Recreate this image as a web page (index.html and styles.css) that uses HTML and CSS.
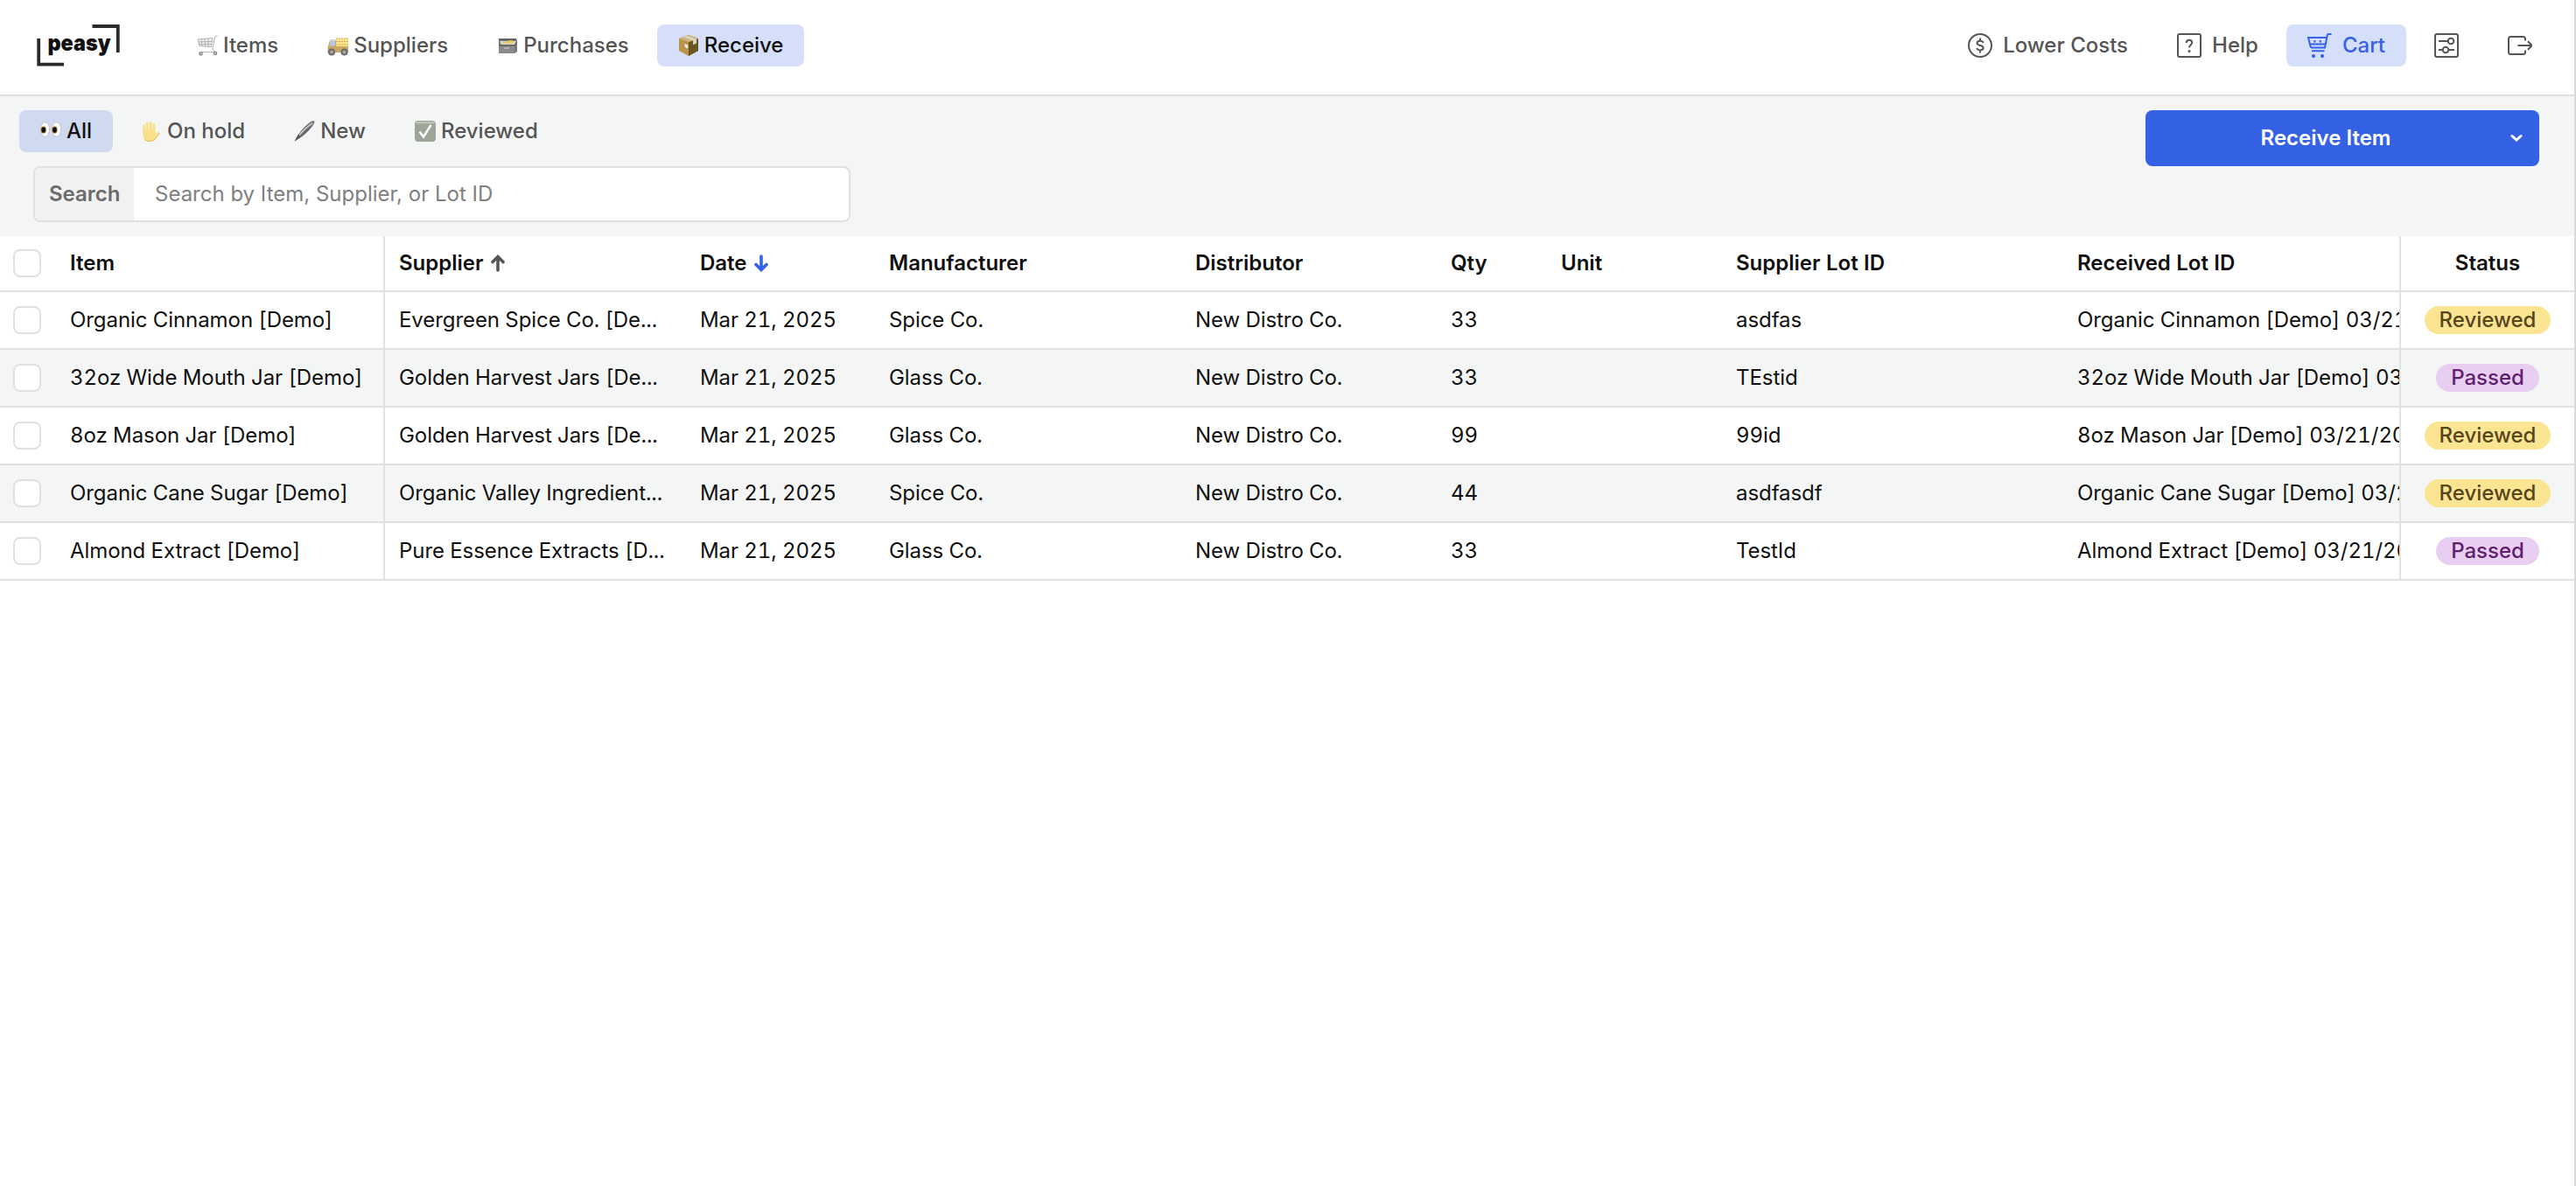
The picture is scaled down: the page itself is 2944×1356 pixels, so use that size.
FILE: index.html
```html
<!DOCTYPE html>
<html lang="en">
<head>
<meta charset="utf-8">
<title>Receive</title>
<link rel="stylesheet" href="styles.css">
</head>
<body>
<div class="app">
  <header class="topbar">
    <svg class="logo" viewBox="0 0 96 50" role="img" aria-label="peasy">
      <path d="M63.500 3h29.300v30M2.200 17v29.600H31" fill="none" stroke="#2b2b2b" stroke-width="3.8"/>
      <text class="logo-text" x="12.500" y="30.500" textLength="72" lengthAdjust="spacingAndGlyphs">peasy</text>
    </svg>
    <nav class="nav">
      <a class="tab"><svg class="emoji" viewBox="0 0 24 24"><path d="M1 5l17-1.5-1.5 10L3 12.5z" fill="#f1f1f1"/><path d="M1 5l17-1.5-1.5 10L3 12.5zM5 4.8l1 8M9 4.5l.6 8.6M13 4l0 9.4M1.5 8l16-.6M2 10.6l15-.2M23.500.8L20.5 2 18 16l3 3.5H5" fill="none" stroke="#a9a9a9" stroke-width=".9"/><circle cx="4.5" cy="21.3" r="1.7" fill="#ccc" stroke="#888" stroke-width="1.3"/><circle cx="21" cy="21" r="1.7" fill="#ccc" stroke="#888" stroke-width="1.3"/></svg>Items</a>
      <a class="tab"><svg class="emoji" viewBox="0 0 24 24"><path d="M10 4h14v15H10z" fill="#ffe588"/><path d="M10 4h14M10 7.5h14M10 11h14" stroke="#c9a95a" stroke-width="1.2" stroke-dasharray="2 1"/><path d="M.5 14L3 6.500q.3-1 1.500-1H10V13h14v7H.5z" fill="#c9a862"/><path d="M3.800 7H9v5.500H2.500z" fill="#b4c7f2"/><path d="M3 5.500h7v1.500H3z" fill="#d5d5d5"/><circle cx="5" cy="19.500" r="3" fill="#aaa" stroke="#6b6b6b" stroke-width="2"/><circle cx="19.500" cy="19.500" r="3" fill="#aaa" stroke="#6b6b6b" stroke-width="2"/></svg>Suppliers</a>
      <a class="tab"><svg class="emoji" viewBox="0 0 24 24"><path d="M2 4h20l1 3v12l-3 2H2z" fill="#777"/><path d="M2 4h20v2H2z" fill="#5d6663"/><path d="M3 7h19l-2 4H5z" fill="#d8d4c2"/><path d="M7 8.500h10M13 7h5" stroke="#edc64e" stroke-width="1.600"/><path d="M2 12h18v9H2z" fill="#8a8a8a"/><path d="M2 12h18M20 12l3-4" stroke="#555"/><path d="M8 15h6" stroke="#bbb" stroke-width="1.500"/></svg>Purchases</a>
      <a class="tab tab-active"><svg class="emoji" viewBox="0 0 24 24"><path d="M12 0l11 4v14l-11 6L1 18V4z" fill="#b8944d"/><path d="M12 8l11-4v14l-11 6z" fill="#6b5621"/><path d="M12 0l11 4-11 4L1 4z" fill="#d0b37a"/><path d="M6 2.200l11 4v5l4-1.700V4.800L9.500 1z" fill="#d9d4c8"/><path d="M7 10l4 1.500v4L8 14z" fill="#eee"/></svg>Receive</a>
    </nav>
    <div class="actions">
      <a class="tab"><svg class="icon" viewBox="0 0 28 28"><circle cx="14" cy="14" r="13"/><path d="M14 5.500v3M14 19.500v3M17.600 10.800C17 9.300 15.700 8.700 14 8.700c-2 0-3.500 1-3.500 2.600 0 3.600 7.200 1.700 7.200 5.300 0 1.700-1.600 2.800-3.700 2.800-1.900 0-3.300-.8-3.900-2.400"/></svg>Lower Costs</a>
      <a class="tab"><svg class="icon" viewBox="0 0 28 28"><rect x="1" y="1" width="26" height="26" rx="2"/><path d="M10.800 11c0-2 1.300-3.200 3.200-3.200s3.200 1.200 3.200 3c0 2.400-3.200 2.700-3.200 5.700"/><circle cx="14" cy="20.500" r="1.500" class="dot"/></svg>Help</a>
      <a class="tab tab-cart"><svg class="icon" viewBox="0 0 28 28"><path d="M27.500 1h-3.300c-.9 0-1.200.5-1.400 1.300L20 16.500H5.500q-1.500 0-2-1.500L1 5h20.500M2.500 12.500h18.500M5 20.300h14.500M8.300 8v2.500M14.800 8v2.500"/><circle cx="7" cy="26" r="2.100" class="dot"/><circle cx="17" cy="26" r="2.100" class="dot"/></svg>Cart</a>
      <a class="tab"><svg class="icon" viewBox="0 0 28 28"><rect x="1" y="1" width="26" height="26" rx="2"/><path d="M5 9h10.500M5 19h4.500M16.500 19H23"/><circle cx="19" cy="9" r="3.300"/><circle cx="13" cy="19" r="3.300"/></svg></a>
      <a class="tab"><svg class="icon" viewBox="0 0 28 28"><path d="M20 8.500V6.500q0-2.500-2.500-2.500h-14Q1 4 1 6.500v15Q1 24 3.500 24h14q2.500 0 2.500-2.500V19.500M11.500 14h16M23 9.200l4.500 4.800-4.500 4.800"/></svg></a>
    </div>
  </header>

  <section class="toolbar">
    <div class="filters">
      <div class="filter-tabs">
        <a class="tab tab-active"><svg class="emoji" viewBox="0 0 24 24"><ellipse cx="5.500" cy="10" rx="5" ry="8.300" fill="#fff" stroke="#c4c4c4"/><ellipse cx="18.500" cy="10" rx="5" ry="8.300" fill="#fff" stroke="#c4c4c4"/><ellipse cx="3.800" cy="10.500" rx="3" ry="4" fill="#8b641f"/><ellipse cx="3.800" cy="10.500" rx="2.200" ry="3" fill="#111"/><ellipse cx="16.500" cy="10.500" rx="3" ry="4" fill="#8b641f"/><ellipse cx="16.500" cy="10.500" rx="2.200" ry="3" fill="#111"/></svg>All</a>
        <a class="tab"><svg class="emoji" viewBox="0 0 24 24"><path d="M3.800 13V6M7.500 12V3M11.300 12V2M15 13V4.500" fill="none" stroke="#fbe08a" stroke-width="3" stroke-linecap="round"/><path d="M2.300 11h14.200v5l2.500-3q1.500-1.300 2.600-.2L17.500 19.500Q15 24 10 24 3.500 24 2.300 16z" fill="#fbe08a"/><path d="M4 21.500q6 4 12 0l5.500-7.500" fill="none" stroke="#ddb65c" stroke-width=".9"/></svg>On hold</a>
        <a class="tab"><svg class="emoji" viewBox="0 0 24 24"><path d="M.5 23.500L5 15.500Q13 5 20 .8q4.500-1.500 3 2.200Q18.500 11 8 19z" fill="#666"/><path d="M6 16.500Q13 8 21.500 2.500" stroke="#c4c4c4" stroke-width="1.800" fill="none"/><path d="M.5 23.500l4.500-8 2 3.500z" fill="#555"/></svg>New</a>
        <a class="tab"><svg class="emoji" viewBox="0 0 24 24"><rect width="24" height="24" rx="4" fill="#9ea597"/><rect x="1.500" y="1" width="21" height="2.500" rx="1.200" fill="#bcc1b9"/><path d="M5.500 12.500l4.500 6L18.500 5" fill="none" stroke="#fff" stroke-width="2.500"/></svg>Reviewed</a>
      </div>
      <div class="search">
        <span class="search-label">Search</span>
        <span class="search-input">Search by Item, Supplier, or Lot ID</span>
      </div>
    </div>
    <div class="split-button">
      <span class="split-main">Receive Item</span>
      <span class="split-toggle"><svg class="chevron" viewBox="0 0 14 10"><path d="M2 2.500l5 4.500 5-4.500"/></svg></span>
    </div>
  </section>

  <main class="table">
    <div class="row row-head">
      <span class="cell cell-check"><i class="checkbox"></i></span>
      <span class="cell cell-item">Item</span>
      <span class="cell">Supplier<svg class="sort" viewBox="0 0 16 20"><path d="M8 18V3M2 8.500l6-6 6 6"/></svg></span>
      <span class="cell">Date<svg class="sort sort-on" viewBox="0 0 16 20"><path d="M8 2v15M2 11.500l6 6 6-6"/></svg></span>
      <span class="cell">Manufacturer</span>
      <span class="cell">Distributor</span>
      <span class="cell">Qty</span>
      <span class="cell">Unit</span>
      <span class="cell">Supplier Lot ID</span>
      <span class="cell cell-lot">Received Lot ID</span>
      <span class="cell cell-status">Status</span>
    </div>
    <div class="row">
      <span class="cell cell-check"><i class="checkbox"></i></span>
      <span class="cell cell-item">Organic Cinnamon [Demo]</span>
      <span class="cell">Evergreen Spice Co. [De...</span>
      <span class="cell">Mar 21, 2025</span>
      <span class="cell">Spice Co.</span>
      <span class="cell">New Distro Co.</span>
      <span class="cell">33</span>
      <span class="cell"></span>
      <span class="cell">asdfas</span>
      <span class="cell cell-lot">Organic Cinnamon [Demo] 03/21/2025</span>
      <span class="cell cell-status"><b class="badge badge-reviewed">Reviewed</b></span>
    </div>
    <div class="row">
      <span class="cell cell-check"><i class="checkbox"></i></span>
      <span class="cell cell-item">32oz Wide Mouth Jar [Demo]</span>
      <span class="cell">Golden Harvest Jars [De...</span>
      <span class="cell">Mar 21, 2025</span>
      <span class="cell">Glass Co.</span>
      <span class="cell">New Distro Co.</span>
      <span class="cell">33</span>
      <span class="cell"></span>
      <span class="cell">TEstid</span>
      <span class="cell cell-lot">32oz Wide Mouth Jar [Demo] 03/21/2025</span>
      <span class="cell cell-status"><b class="badge badge-passed">Passed</b></span>
    </div>
    <div class="row">
      <span class="cell cell-check"><i class="checkbox"></i></span>
      <span class="cell cell-item">8oz Mason Jar [Demo]</span>
      <span class="cell">Golden Harvest Jars [De...</span>
      <span class="cell">Mar 21, 2025</span>
      <span class="cell">Glass Co.</span>
      <span class="cell">New Distro Co.</span>
      <span class="cell">99</span>
      <span class="cell"></span>
      <span class="cell">99id</span>
      <span class="cell cell-lot">8oz Mason Jar [Demo] 03/21/2025</span>
      <span class="cell cell-status"><b class="badge badge-reviewed">Reviewed</b></span>
    </div>
    <div class="row">
      <span class="cell cell-check"><i class="checkbox"></i></span>
      <span class="cell cell-item">Organic Cane Sugar [Demo]</span>
      <span class="cell">Organic Valley Ingredient...</span>
      <span class="cell">Mar 21, 2025</span>
      <span class="cell">Spice Co.</span>
      <span class="cell">New Distro Co.</span>
      <span class="cell">44</span>
      <span class="cell"></span>
      <span class="cell">asdfasdf</span>
      <span class="cell cell-lot">Organic Cane Sugar [Demo] 03/21/2025</span>
      <span class="cell cell-status"><b class="badge badge-reviewed">Reviewed</b></span>
    </div>
    <div class="row">
      <span class="cell cell-check"><i class="checkbox"></i></span>
      <span class="cell cell-item">Almond Extract [Demo]</span>
      <span class="cell">Pure Essence Extracts [D...</span>
      <span class="cell">Mar 21, 2025</span>
      <span class="cell">Glass Co.</span>
      <span class="cell">New Distro Co.</span>
      <span class="cell">33</span>
      <span class="cell"></span>
      <span class="cell">TestId</span>
      <span class="cell cell-lot">Almond Extract [Demo] 03/21/2025</span>
      <span class="cell cell-status"><b class="badge badge-passed">Passed</b></span>
    </div>
  </main>
</div>
</body>
</html>
```
FILE: styles.css
```css
* { box-sizing: border-box; }

body {
  margin: 0;
  background: #fff;
  color: #111;
  font: 400 24px/32px Inter, "Liberation Sans", sans-serif;
}

.app {
  min-height: 1356px;
  border-right: 2px solid #d8d8d8;
}

/* Top navigation */
.topbar {
  display: flex;
  align-items: center;
  height: 110px;
  padding: 0 24px 4px 42px;
  border-bottom: 2px solid #e0e0e0;
}
.logo { width: 96px; height: 50px; }
.logo-text { font: 900 26px Inter, sans-serif; fill: #111; }
.nav { display: flex; gap: 8px; margin-left: 63px; }
.actions { display: flex; gap: 8px; margin-left: auto; }

.tab {
  display: flex;
  align-items: center;
  height: 48px;
  padding: 0 24px;
  border-radius: 8px;
  color: #555;
  font-weight: 500;
  white-space: nowrap;
}
.tab-active { background: #d6dffa; color: #111; }
.tab-cart { background: #d6dffa; color: #3561e4; }

.emoji { width: 24px; height: 24px; margin-right: 6px; flex: none; }
.icon {
  width: 28px;
  height: 28px;
  flex: none;
  fill: none;
  stroke: currentColor;
  stroke-width: 2;
}
.icon .dot { fill: currentColor; stroke: none; }
.actions .tab { gap: 12px; }

/* Filters and search */
.toolbar {
  display: flex;
  justify-content: space-between;
  height: 160px;
  padding: 16px 40px 0 22px;
  background: #f4f6f5;
}
.filter-tabs { display: flex; gap: 8px; }
.filter-tabs .tab-active { background: #cfdaf1; }
.search {
  display: flex;
  align-items: stretch;
  width: 934px;
  height: 64px;
  margin: 16px 0 0 16px;
  border: 2px solid #e0e0e0;
  border-radius: 8px;
  background: #fff;
  overflow: hidden;
  line-height: 60px;
}
.search-label { width: 113px; padding-left: 16px; background: #f1f1f1; color: #6b6b6b; font-weight: 600; }
.search-input { padding-left: 24px; color: #808080; }

.split-button {
  display: flex;
  width: 450px;
  height: 64px;
  border-radius: 8px;
  background: #3561e4;
  color: #fff;
  font-weight: 600;
  line-height: 63px;
}
.split-main { flex: 1; padding-left: 14px; text-align: center; }
.split-toggle { display: flex; align-items: center; justify-content: center; width: 52px; }
.chevron { width: 14px; height: 10px; fill: none; stroke: #fff; stroke-width: 3; stroke-linecap: round; }

/* Table */
.row {
  display: grid;
  grid-template-columns: 64px 376px 344px 216px 350px 292px 126px 200px 390px 386px 198px;
  height: 66px;
  border-bottom: 2px solid #e0e0e0;
  font-variant-numeric: tabular-nums;
  letter-spacing: -.07px;
}
.row:nth-child(odd) { background: #f4f6f5; }
.row.row-head { height: 64px; background: #fff; font-weight: 600; letter-spacing: 0; }
.cell {
  display: flex;
  align-items: center;
  min-width: 0;
  padding-left: 16px;
  overflow: hidden;
  white-space: nowrap;
}
.cell-item, .cell-lot { border-right: 2px solid #e0e0e0; }
.cell-status { justify-content: center; padding: 0; letter-spacing: 0; }
.checkbox { width: 32px; height: 32px; flex: none; border: 2px solid #e0e0e0; border-radius: 8px; background: #fff; }
.cell-check { padding-left: 15px; }
.sort { width: 16px; height: 20px; margin-left: 8px; fill: none; stroke: #555; stroke-width: 3.6; stroke-linecap: round; }
.sort-on { stroke: #3561e4; }

.badge { height: 32px; padding: 0 17px; border-radius: 16px; font-weight: 500; line-height: 31px; }
.badge-reviewed { background: #fbe592; color: #57461b; }
.badge-passed { background: #e8cff1; color: #5f1f6e; }
```
